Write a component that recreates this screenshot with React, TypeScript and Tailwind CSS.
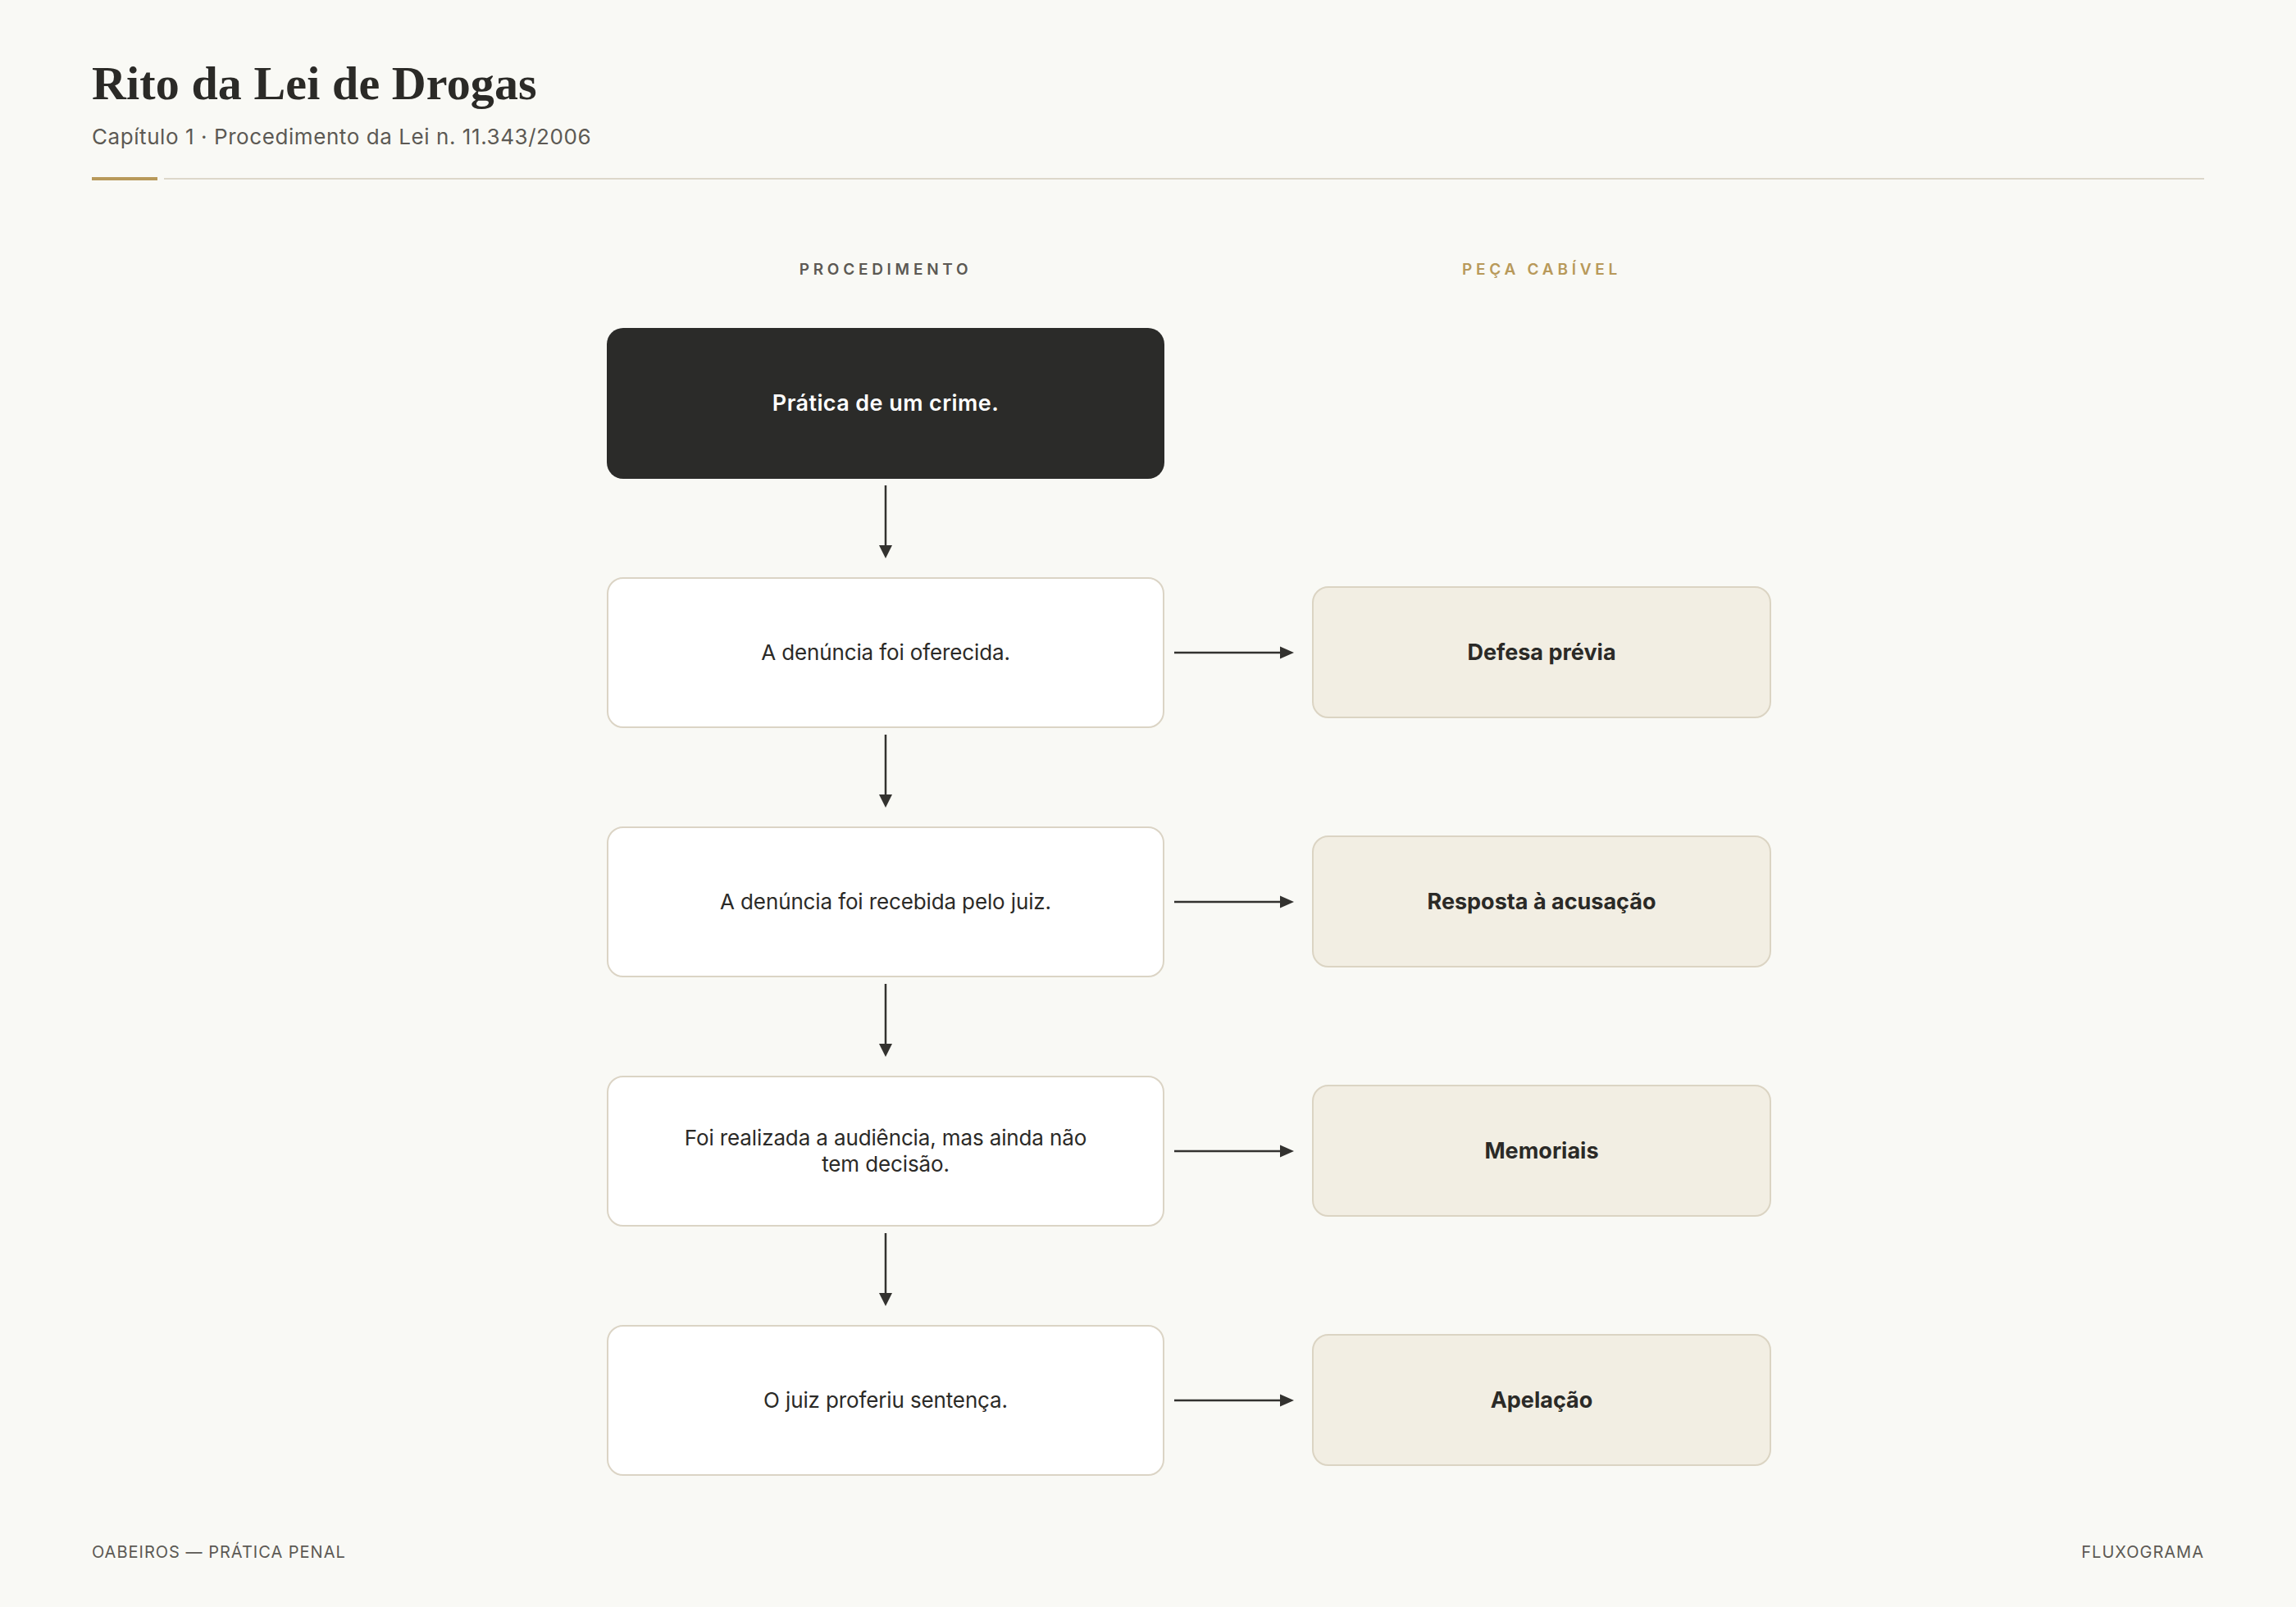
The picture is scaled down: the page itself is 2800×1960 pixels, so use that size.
import React from "react";

const STEPS: { text: string; piece?: string }[] = [
	{ text: "A denúncia foi oferecida.", piece: "Defesa prévia" },
	{ text: "A denúncia foi recebida pelo juiz.", piece: "Resposta à acusação" },
	{ text: "Foi realizada a audiência, mas ainda não tem decisão.", piece: "Memoriais" },
	{ text: "O juiz proferiu sentença.", piece: "Apelação" },
];

function DownArrow() {
	return (
		<div className="flex h-[120px] w-[680px] justify-center">
			<svg width="20" height="120" viewBox="0 0 20 120" className="block">
				<line x1="10" y1="8" x2="10" y2="84" stroke="#33322f" strokeWidth="2.5" />
				<polygon points="2,81 18,81 10,97" fill="#33322f" />
			</svg>
		</div>
	);
}

function RightArrow() {
	return (
		<div className="flex w-[180px] items-center">
			<svg width="180" height="20" viewBox="0 0 180 20" className="block">
				<line x1="12" y1="10" x2="144" y2="10" stroke="#33322f" strokeWidth="2.5" />
				<polygon points="141,2.5 141,17.5 158,10" fill="#33322f" />
			</svg>
		</div>
	);
}

export default function App() {
	return (
		<div className="min-h-screen bg-[#f9f9f5] px-[112px] pt-[67px] pb-[52px] text-[#2b2a27] font-['Inter',sans-serif]">
			{/* Header */}
			<h1 className="font-['Liberation_Serif',serif] text-[58px] font-bold leading-[1.2] tracking-[0.002em] text-[#2b2a27]">
				Rito da Lei de Drogas
			</h1>
			<p className="mt-[12px] text-[26px] leading-[1.4] tracking-[0.022em] text-[#5c5954]">
				Capítulo 1 · Procedimento da Lei n. 11.343/2006
			</p>
			<div className="mt-[31px] flex items-center gap-2">
				<div className="h-[4px] w-[80px] bg-[#b8995a]" />
				<div className="h-[2px] flex-1 bg-[#ddd7ca]" />
			</div>

			{/* Flowchart */}
			<div className="ml-[628px] mt-[98px]">
				<div className="flex">
					<div className="w-[680px] text-center text-[19px] font-semibold uppercase leading-[1.2] tracking-[0.25em] text-[#5c5954]">
						Procedimento
					</div>
					<div className="w-[180px]" />
					<div className="w-[560px] text-center text-[19px] font-semibold uppercase leading-[1.2] tracking-[0.25em] text-[#b8995a]">
						Peça cabível
					</div>
				</div>

				<div className="mt-[59px] flex h-[184px] w-[680px] items-center justify-center rounded-[20px] bg-[#2b2b29] px-12 text-center text-[27px] font-semibold tracking-[0.015em] text-white">
					Prática de um crime.
				</div>

				{STEPS.map((step) => (
					<div key={step.text}>
						<DownArrow />
						<div className="flex items-center">
							<div className="flex h-[184px] w-[680px] items-center justify-center rounded-[20px] border-2 border-[#dbd4c5] bg-white px-[80px] text-center text-[26px] leading-[32px] tracking-[-0.005em] text-[#2b2a27]">
								{step.text}
							</div>
							<RightArrow />
							<div className="flex h-[161px] w-[560px] items-center justify-center rounded-[20px] border-2 border-[#dbd4c3] bg-[#f2eee3] text-center text-[27px] font-bold text-[#2b2a27]">
								{step.piece}
							</div>
						</div>
					</div>
				))}
			</div>

			{/* Footer */}
			<div className="mt-[78px] flex items-center justify-between text-[20px] uppercase leading-[1.5] tracking-[0.05em] text-[#5c5954]">
				<span>OABEIROS — Prática penal</span>
				<span>Fluxograma</span>
			</div>
		</div>
	);
}
